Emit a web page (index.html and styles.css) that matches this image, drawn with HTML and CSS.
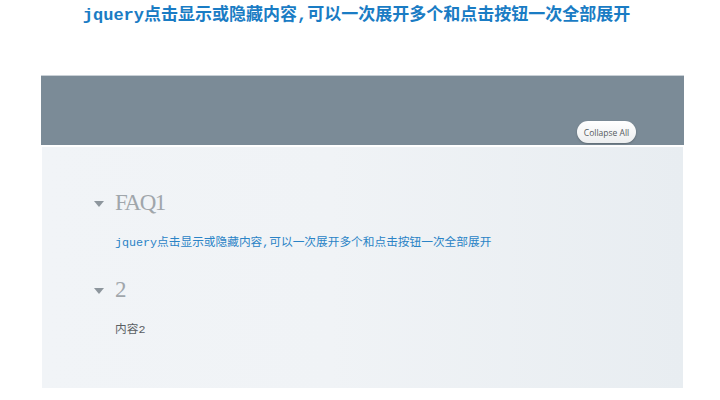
FILE: index.html
```html
<!DOCTYPE html>
<html>
<head>
<meta charset="utf-8">
<link rel="stylesheet" href="styles.css">
</head>
<body>
<h1 class="title">jquery点击显示或隐藏内容,可以一次展开多个和点击按钮一次全部展开</h1>
<div class="faq">
  <div class="faq-head">
    <button class="toggle-all">Collapse All</button>
  </div>
  <div class="faq-body">
    <div class="item">
      <div class="q"><span class="arrow"></span><span class="q-text">FAQ1</span></div>
      <div class="a a-blue">jquery点击显示或隐藏内容,可以一次展开多个和点击按钮一次全部展开</div>
    </div>
    <div class="item">
      <div class="q"><span class="arrow"></span><span class="q-text">2</span></div>
      <div class="a">内容2</div>
    </div>
  </div>
</div>
</body>
</html>
```
FILE: styles.css
```css
html, body {
  margin: 0;
  padding: 0;
  background: #ffffff;
}
.title {
  margin: 0;
  padding: 5px 7px 0 0;
  height: 75px;
  box-sizing: border-box;
  text-align: center;
  font-family: "Liberation Mono", "Noto Sans CJK SC", monospace;
  font-size: 17px;
  line-height: 22px;
  font-weight: bold;
  color: #1a7cc4;
}
.faq {
  margin-left: 41px;
  width: 643px;
}
.faq-head {
  height: 70px;
  background: #7b8b97;
  border-top: 1px solid #c9d0d6;
  display: flex;
  justify-content: flex-end;
  align-items: flex-end;
  padding: 0 48px 2px 0;
  box-sizing: border-box;
}
.toggle-all {
  width: 59px;
  height: 22px;
  border: 0;
  border-radius: 11px;
  background: linear-gradient(#ffffff, #eceeef);
  box-shadow: 0 1px 2px rgba(0,0,0,0.25);
  font-family: "Open Sans", "Liberation Sans", sans-serif;
  font-size: 8.5px;
  color: #555b60;
  padding: 0;
}
.faq-body {
  margin-top: 2px;
  margin-left: 1px;
  width: 641px;
  height: 241px;
  background: linear-gradient(90deg, #f1f4f7, #f0f3f6 45%, #e8edf1);
  padding: 41px 0 0 52px;
  box-sizing: border-box;
}
.item {
  margin-bottom: 24px;
}
.q {
  display: flex;
  align-items: center;
  height: 30px;
}
.arrow {
  width: 0;
  height: 0;
  border-left: 5px solid transparent;
  border-right: 5px solid transparent;
  border-top: 6px solid #8d969d;
  margin-right: 11px;
  margin-top: 2px;
}
.q-text {
  font-family: "Liberation Serif", serif;
  font-size: 23px;
  letter-spacing: -1.5px;
  color: #a0a6ab;
}
.a {
  margin-top: 17px;
  padding-left: 21px;
  font-family: "Liberation Mono", "Noto Sans CJK SC", monospace;
  font-size: 11.7px;
  line-height: 16px;
  color: #5a5f63;
}
.a-blue {
  color: #2a83c6;
}
```
